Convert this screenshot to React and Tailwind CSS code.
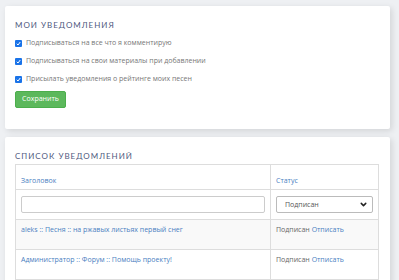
import React from "react";
import { ChevronDown } from "lucide-react";

const rows = [
  { title: "aleks :: Песня :: на ржавых листьях первый снег" },
  { title: "Администратор :: Форум :: Помощь проекту!" },
];

const options = [
  "Подписываться на все что я комментирую",
  "Подписываться на свои материалы при добавлении",
  "Присылать уведомления о рейтинге моих песен",
];

const Check = () => (
  <span className="w-[7px] h-[7px] bg-[#1a73e8] rounded-[1px] flex items-center justify-center shrink-0">
    <svg width="5" height="5" viewBox="0 0 10 10">
      <path d="M1.5 5.5 L4 8 L8.5 2" stroke="white" strokeWidth="2" fill="none" />
    </svg>
  </span>
);

const App = () => {
  return (
    <div
      className="h-[280px] overflow-hidden bg-[#eef0f3] pt-[6px] pl-[5px] pr-[9px]"
      style={{ fontFamily: '"Open Sans", "Liberation Sans", sans-serif' }}
    >
      {/* Settings card */}
      <div className="bg-white shadow-[2px_2px_6px_rgba(0,0,0,0.12)] rounded-[2px] px-[10px] pt-[14px] pb-[21px]">
        <p className="text-[8px] leading-[10px] tracking-[1px] text-[#4f5a80] uppercase" style={{ fontFamily: "Lato, sans-serif" }}>
          Мои уведомления
        </p>

        <div className="mt-[9px] flex flex-col gap-[10px]">
          {options.map((o, i) => (
            <label key={i} className="flex items-center gap-[4px] h-[8px]">
              <Check />
              <span className="text-[7px] leading-[8px] text-[#777]">{o}</span>
            </label>
          ))}
        </div>

        <button className="mt-[8px] w-[51px] h-[17px] bg-[#5cb85c] border border-[#4cae4c] rounded-[2px] text-[7px] text-white">
          Сохранить
        </button>
      </div>

      {/* List card */}
      <div className="mt-[8px] bg-white shadow-[2px_2px_6px_rgba(0,0,0,0.12)] rounded-[2px] px-[10px] pt-[14px] pb-[20px]">
        <p className="text-[8px] leading-[10px] tracking-[1px] text-[#4f5a80] uppercase" style={{ fontFamily: "Lato, sans-serif" }}>
          Список уведомлений
        </p>

        <table className="mt-[3px] w-[364px] border-collapse text-[7px] leading-[9px]">
          <thead>
            <tr className="h-[25px]">
              <th className="w-[255px] border border-[#ddd] px-[5px] pb-[4px] align-bottom text-left font-normal text-[#4a80c1]">
                Заголовок
              </th>
              <th className="border border-[#ddd] px-[5px] pb-[4px] align-bottom text-left font-normal text-[#4a80c1]">
                Статус
              </th>
            </tr>
          </thead>
          <tbody>
            <tr className="h-[30px]">
              <td className="border border-[#ddd] px-[5px]">
                <div className="h-[17px] border border-[#ccc] rounded-[2px]" />
              </td>
              <td className="border border-[#ddd] px-[5px]">
                <div className="h-[17px] border border-[#bbb] rounded-[2px] flex items-center justify-between pl-[8px] pr-[4px] text-[#555]">
                  <span>Подписан</span>
                  <ChevronDown size={9} strokeWidth={4} className="text-[#222]" />
                </div>
              </td>
            </tr>
            {rows.map((r, i) => (
              <tr key={i} className={`h-[30px] ${i % 2 === 0 ? "bg-[#f9f9f9]" : "bg-white"}`}>
                <td className="border border-[#ddd] px-[5px] pt-[5px] align-top text-[#4a80c1]">{r.title}</td>
                <td className="border border-[#ddd] px-[5px] pt-[5px] align-top text-[#666]">
                  Подписан <span className="text-[#4a80c1]">Отписать</span>
                </td>
              </tr>
            ))}
          </tbody>
        </table>
      </div>
    </div>
  );
};

export default App;
